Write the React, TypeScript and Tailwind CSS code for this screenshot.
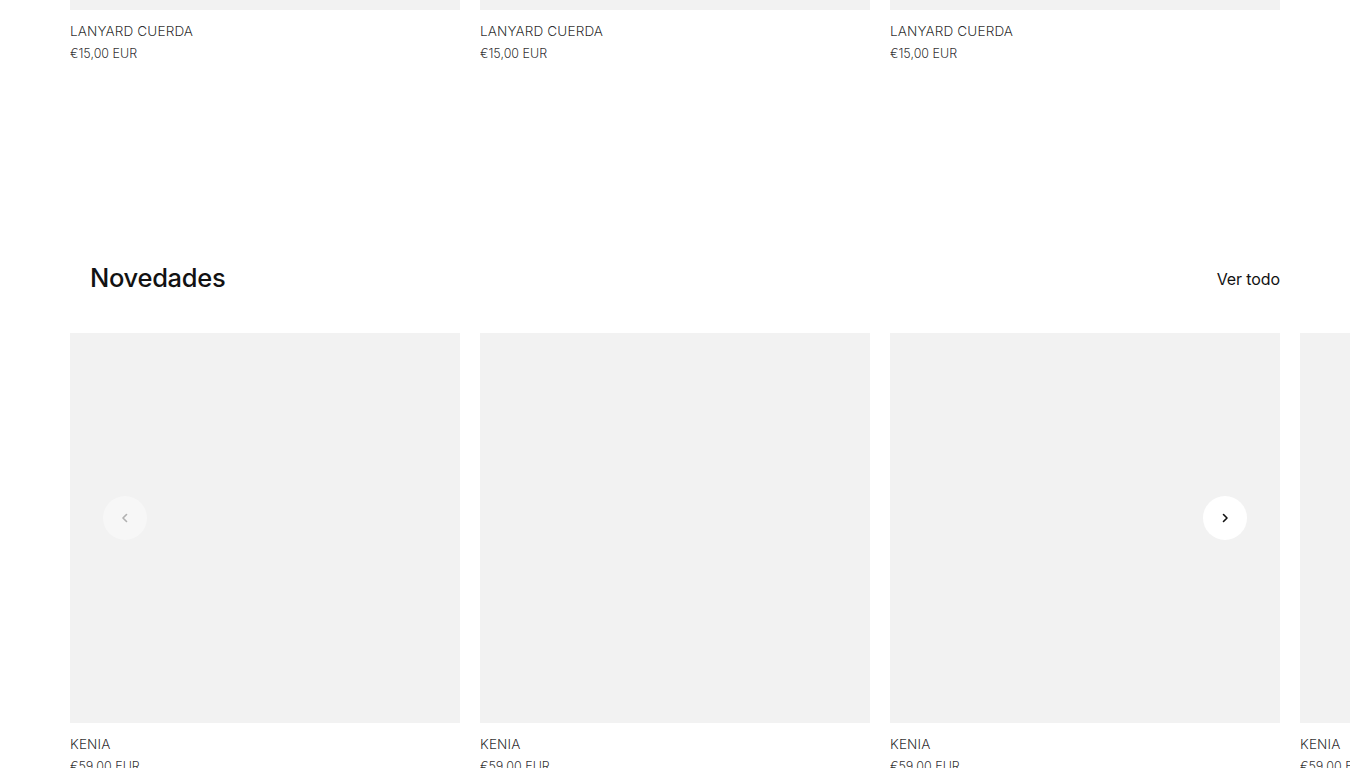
import React from "react";

const font = { fontFamily: "Inter, 'Noto Sans', sans-serif" };

function Card({ title, price, imgH }: { title: string; price: string; imgH: string }) {
  return (
    <div className="w-[390px] shrink-0">
      <div className={`${imgH} w-full bg-[#f2f2f2]`} />
      <div className="pt-[12px] text-[13.6px] leading-[18px] tracking-[0.1px] text-[#121212]/90 font-light">{title}</div>
      <div className="pt-[6px] text-[12.5px] leading-[16px] text-[#121212]/90 font-light">{price}</div>
    </div>
  );
}

export default function App() {
  return (
    <div className="w-[1365px] h-[768px] overflow-hidden bg-white" style={font}>
      <div className="w-[1350px] overflow-hidden">
        <div className="flex gap-[20px] pl-[70px]">
          <Card title="LANYARD CUERDA" price="€15,00 EUR" imgH="h-[10px]" />
          <Card title="LANYARD CUERDA" price="€15,00 EUR" imgH="h-[10px]" />
          <Card title="LANYARD CUERDA" price="€15,00 EUR" imgH="h-[10px]" />
        </div>

        <div className="mt-[196px] flex items-center justify-between pl-[90px] pr-[70px] h-[40px]">
          <h2 className="text-[25.5px] font-medium tracking-[-0.3px] text-[#121212]">Novedades</h2>
          <a className="text-[16px] text-[#121212] tracking-[-0.1px] pt-[2px]">Ver todo</a>
        </div>

        <div className="relative mt-[35px]">
          <div className="flex gap-[20px] pl-[70px]">
            <Card title="KENIA" price="€59,00 EUR" imgH="h-[390px]" />
            <Card title="KENIA" price="€59,00 EUR" imgH="h-[390px]" />
            <Card title="KENIA" price="€59,00 EUR" imgH="h-[390px]" />
            <Card title="KENIA" price="€59,00 EUR" imgH="h-[390px]" />
          </div>
          <button className="absolute left-[103px] top-[163px] w-[44px] h-[44px] rounded-full bg-white/40 flex items-center justify-center">
            <svg width="12" height="12" viewBox="0 0 12 12" fill="none" className="opacity-30">
              <path d="M7.5 2.5 L4 6 L7.5 9.5" stroke="#121212" strokeWidth="1.6" strokeLinecap="round" strokeLinejoin="round" />
            </svg>
          </button>
          <button className="absolute left-[1203px] top-[163px] w-[44px] h-[44px] rounded-full bg-white flex items-center justify-center">
            <svg width="12" height="12" viewBox="0 0 12 12" fill="none">
              <path d="M4.5 2.5 L8 6 L4.5 9.5" stroke="#121212" strokeWidth="1.6" strokeLinecap="round" strokeLinejoin="round" />
            </svg>
          </button>
        </div>
      </div>
    </div>
  );
}
